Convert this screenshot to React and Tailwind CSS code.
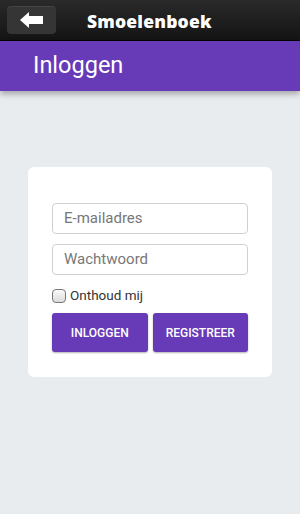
export default function App() {
  return (
    <div className="w-[300px] h-[514px] bg-[#e9ecef] flex flex-col overflow-hidden" style={{ fontFamily: "Roboto, 'Noto Sans', sans-serif" }}>
      <div className="h-[41px] shrink-0 bg-gradient-to-b from-[#2a2a2a] to-[#141414] border-b border-[#000] flex items-center relative">
        <div className="ml-[7px] w-[49px] h-[28px] rounded-[4px] bg-[#353535] shadow-[inset_0_1px_0_rgba(255,255,255,0.08)] flex items-center justify-center">
          <svg width="24" height="16" viewBox="0 0 24 16">
            <path d="M0 8 L9 0 L9 4 L23 4 L23 12 L9 12 L9 16 Z" fill="#fff" />
          </svg>
        </div>
        <div className="absolute left-[87px] top-[8px] text-white text-[17.5px] font-black tracking-[0.2px]" style={{ fontFamily: "'Open Sans', 'Noto Sans', sans-serif" }}>
          Smoelenboek
        </div>
      </div>
      <div className="h-[50px] shrink-0 bg-[#673ab7] flex items-center pl-[33px] shadow-[0_3px_6px_rgba(0,0,0,0.3)] relative z-10">
        <span className="text-white text-[23.5px] leading-none">Inloggen</span>
      </div>
      <div className="flex-1 flex flex-col items-center pt-[76px]">
        <div className="w-[244px] h-[210px] bg-white rounded-[6px] pt-[36px] px-[24px]">
          <div className="h-[31px] border border-[#d0d0d0] rounded-[4px] flex items-center px-[11px] text-[15px] text-[#777]">E-mailadres</div>
          <div className="h-[31px] mt-[10px] border border-[#d0d0d0] rounded-[4px] flex items-center px-[11px] text-[15px] text-[#777]">Wachtwoord</div>
          <div className="flex items-center mt-[13px] h-[15px]">
            <div className="w-[14px] h-[14px] rounded-[4px] border border-[#777] bg-gradient-to-b from-[#fafafa] to-[#dcdcdc]" />
            <span className="ml-[4px] text-[13.5px] text-[#333]">Onthoud mij</span>
          </div>
          <div className="flex gap-[5px] mt-[10px]">
            <div className="w-[96px] h-[39px] bg-[#673ab7] rounded-[3px] flex items-center justify-center text-white text-[12px] font-medium shadow-[0_1px_2px_rgba(0,0,0,0.3)]">INLOGGEN</div>
            <div className="w-[96px] h-[39px] bg-[#673ab7] rounded-[3px] flex items-center justify-center text-white text-[12px] font-medium shadow-[0_1px_2px_rgba(0,0,0,0.3)]">REGISTREER</div>
          </div>
        </div>
      </div>
    </div>
  );
}
